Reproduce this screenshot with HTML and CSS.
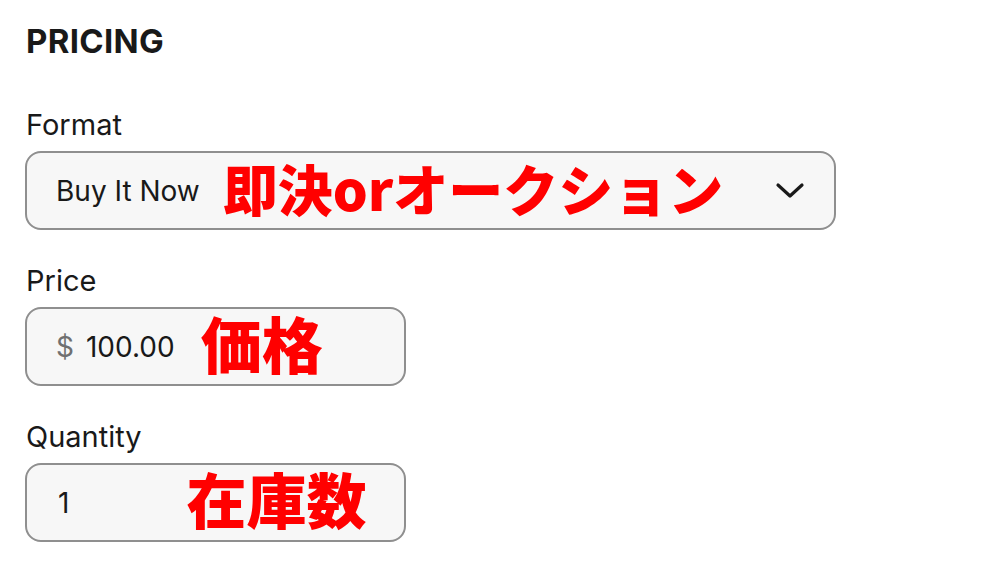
FILE: index.html
```html
<!DOCTYPE html>
<html lang="ja">
<head>
<meta charset="utf-8">
<link rel="stylesheet" href="styles.css">
</head>
<body>
<div class="page">
  <h2 class="title">PRICING</h2>
  <div class="field">
    <div class="label">Format</div>
    <div class="box wide">
      <span class="value">Buy It Now</span>
      <span class="note note-format">即決orオークション</span>
      <svg class="chev" width="30" height="18" viewBox="0 0 30 18"><path d="M3 3 L15 14 L27 3" fill="none" stroke="#191919" stroke-width="3.2" stroke-linecap="round" stroke-linejoin="round"/></svg>
    </div>
  </div>
  <div class="field">
    <div class="label">Price</div>
    <div class="box narrow">
      <span class="prefix">$</span>
      <span class="value">100.00</span>
      <span class="note note-price">価格</span>
    </div>
  </div>
  <div class="field">
    <div class="label">Quantity</div>
    <div class="box narrow">
      <span class="value qty">1</span>
      <span class="note note-qty">在庫数</span>
    </div>
  </div>
</div>
</body>
</html>
```
FILE: styles.css
```css
html, body {
  margin: 0;
  padding: 0;
  background: #ffffff;
}
.page {
  padding: 21px 0 0 25px;
  font-family: "Inter", "Noto Sans", "Noto Sans CJK JP", sans-serif;
  color: #191919;
}
.title {
  margin: 0 0 0 1px;
  font-size: 33px;
  font-weight: 700;
  line-height: 40px;
  letter-spacing: 0.3px;
}
.field {
  display: flex;
  flex-direction: column;
}
.label {
  margin: 45px 0 8px 1px;
  font-size: 29px;
  line-height: 37px;
  height: 37px;
}
.field + .field .label {
  margin-top: 32px;
}
.box {
  box-sizing: border-box;
  height: 79px;
  border: 2px solid #8f8f8f;
  border-radius: 16px;
  background: #f7f7f7;
  display: flex;
  align-items: center;
  padding-left: 29px;
}
.wide { width: 811px; padding-right: 29px; }
.narrow { width: 381px; }
.value {
  font-size: 28px;
  color: #191919;
}
.prefix {
  font-size: 28px;
  color: #707070;
  margin-right: 12px;
}
.qty { margin-left: 2px; }
.note {
  font-family: "Noto Sans CJK JP", sans-serif;
  font-weight: 900;
  color: #ff0000;
  line-height: 1;
  font-size: 55px;
}
.note-format { margin-left: 23px; margin-top: -6px; }
.note-price { margin-left: 26px; font-size: 61px; margin-top: -9px; }
.note-qty { margin-left: 117px; font-size: 60px; margin-top: -10px; }
.chev { margin-left: auto; }
```
